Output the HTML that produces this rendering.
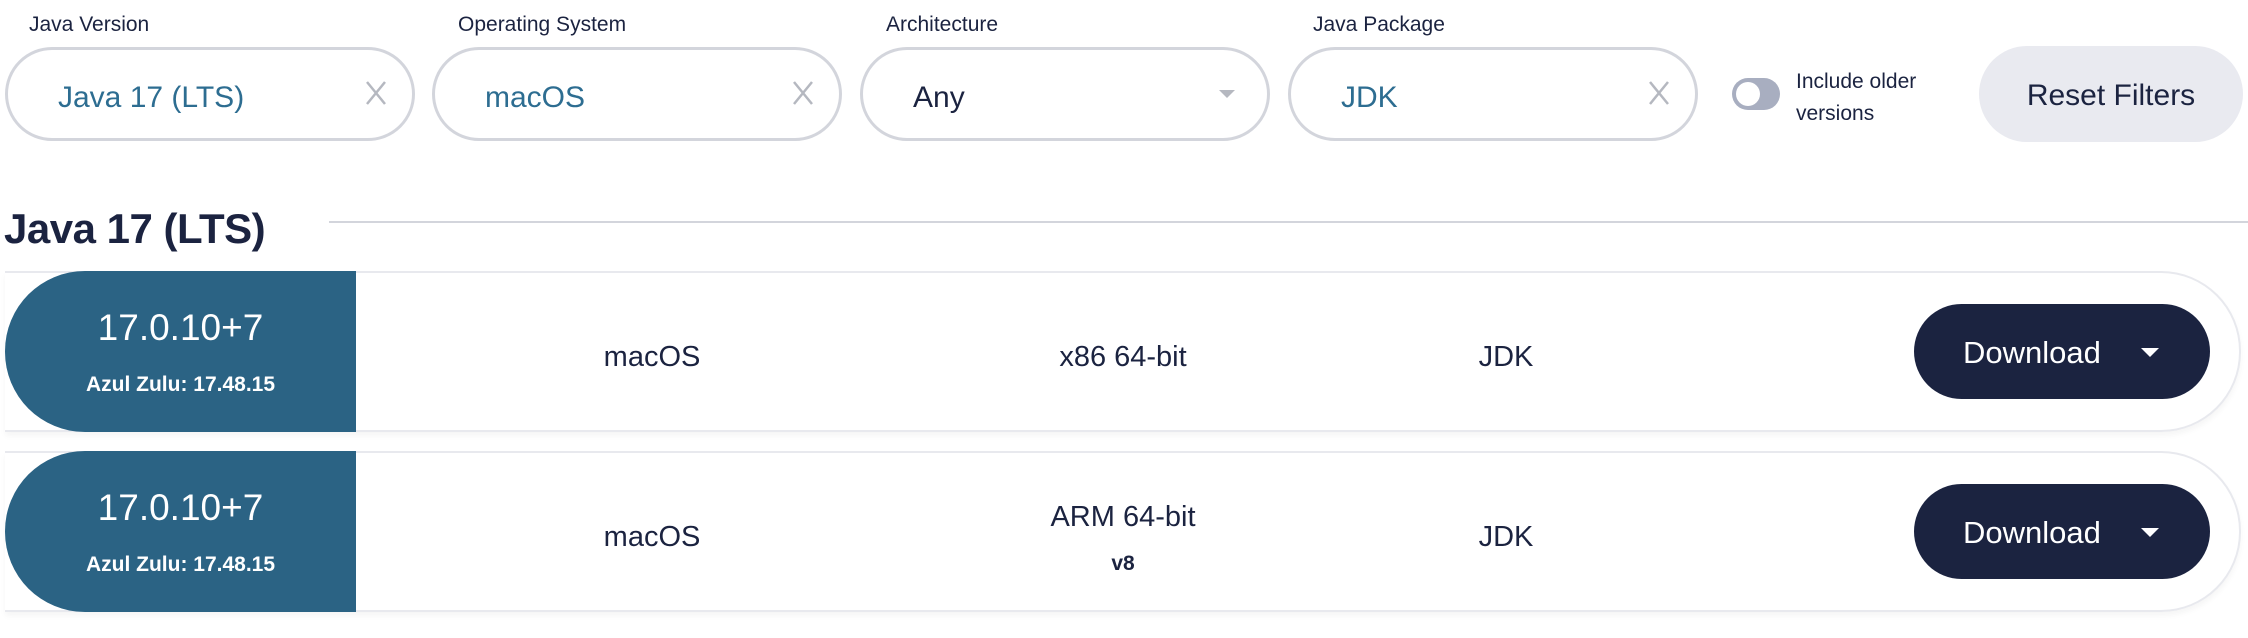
<!DOCTYPE html>
<html><head><meta charset="utf-8"><style>
*{box-sizing:border-box;margin:0;padding:0}
body{width:2248px;height:638px;background:#fff;font-family:"Liberation Sans",sans-serif;color:#1b2340;position:relative;overflow:hidden}
.abs{position:absolute}
.lbl{font-size:21px;top:13px;color:#1b2340}
.box{top:47px;height:94px;border:3px solid #d3d5dc;border-radius:47px;width:410px}
.box .v{position:absolute;left:50px;top:4px;line-height:88px;font-size:30px;color:#2d6d91}
.box .x{position:absolute;right:22px;top:26px;width:28px;height:34px}
.card{left:5px;width:2236px;height:161px;border:2px solid #e8e9ee;border-left:none;border-radius:0 80px 80px 0;box-shadow:0 4px 6px rgba(0,0,0,.04)}
.blue{left:5px;width:351px;height:161px;background:#2b6384;border-radius:80px 0 0 80px/80px 0 0 80px;color:#fff;text-align:center}
.blue .a{position:absolute;left:0;right:0;top:36px;font-size:37px}
.blue .b{position:absolute;left:0;right:0;top:102px;font-size:21px;font-weight:bold}
.col{font-size:29px;text-align:center;width:300px}
.dl{left:1914px;width:296px;height:95px;background:#1b2340;border-radius:48px;color:#fff;font-size:31px}
.dl span{position:absolute;left:49px;top:31px}
.dl i{position:absolute;left:227px;top:44px;width:0;height:0;border-left:9px solid transparent;border-right:9px solid transparent;border-top:9px solid #fff}
</style></head><body>
<div class="abs lbl" style="left:29px">Java Version</div>
<div class="abs lbl" style="left:458px">Operating System</div>
<div class="abs lbl" style="left:886px">Architecture</div>
<div class="abs lbl" style="left:1313px">Java Package</div>

<div class="abs box" style="left:5px"><div class="v">Java 17 (LTS)</div><svg class="x" viewBox="0 0 28 34"><path d="M5 6L23 28M23 6L5 28" stroke="#b5b8c0" stroke-width="2.5"/></svg></div>
<div class="abs box" style="left:432px"><div class="v">macOS</div><svg class="x" viewBox="0 0 28 34"><path d="M5 6L23 28M23 6L5 28" stroke="#b5b8c0" stroke-width="2.5"/></svg></div>
<div class="abs box" style="left:860px"><div class="v" style="color:#1b2340">Any</div><svg class="x" viewBox="0 0 28 34" style="right:26px"><path d="M6 14L22 14L14 22Z" fill="#b5b8c0"/></svg></div>
<div class="abs box" style="left:1288px"><div class="v">JDK</div><svg class="x" viewBox="0 0 28 34"><path d="M5 6L23 28M23 6L5 28" stroke="#b5b8c0" stroke-width="2.5"/></svg></div>

<div class="abs" style="left:1732px;top:78px;width:48px;height:32px;border-radius:16px;background:#a8aec0"><div style="position:absolute;left:4px;top:4px;width:24px;height:24px;border-radius:50%;background:#fff"></div></div>
<div class="abs" style="left:1796px;top:66px;font-size:21px;line-height:32px">Include older<br>versions</div>
<div class="abs" style="left:1979px;top:46px;width:264px;height:96px;border-radius:48px;background:#e9eaf0;font-size:30px;text-align:center;line-height:100px">Reset Filters</div>

<div class="abs" style="left:4px;top:205px;font-size:42px;font-weight:bold;letter-spacing:-0.5px">Java 17 (LTS)</div>
<div class="abs" style="left:329px;top:221px;width:1919px;height:2px;background:#d3d5dc"></div>

<div class="abs card" style="top:271px"></div>
<div class="abs blue" style="top:271px"><div class="a">17.0.10+7</div><div class="b">Azul Zulu: 17.48.15</div></div>
<div class="abs col" style="left:502px;top:341px">macOS</div>
<div class="abs col" style="left:973px;top:341px">x86 64-bit</div>
<div class="abs col" style="left:1356px;top:341px">JDK</div>
<div class="abs dl" style="top:304px"><span>Download</span><i></i></div>

<div class="abs card" style="top:451px"></div>
<div class="abs blue" style="top:451px"><div class="a">17.0.10+7</div><div class="b">Azul Zulu: 17.48.15</div></div>
<div class="abs col" style="left:502px;top:521px">macOS</div>
<div class="abs col" style="left:973px;top:501px">ARM 64-bit</div>
<div class="abs col" style="left:973px;top:552px;font-size:21px;font-weight:bold">v8</div>
<div class="abs col" style="left:1356px;top:521px">JDK</div>
<div class="abs dl" style="top:484px"><span>Download</span><i></i></div>
</body></html>
